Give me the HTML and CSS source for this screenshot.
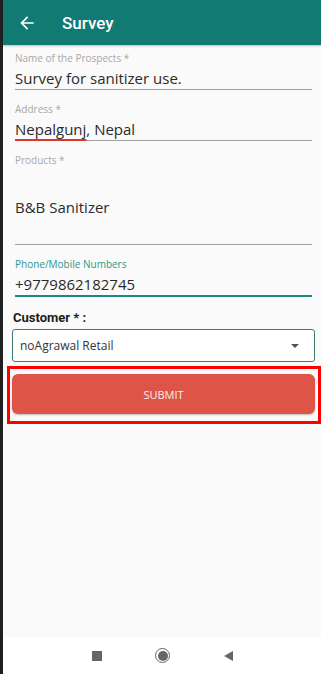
FILE: index.html
```html
<!DOCTYPE html>
<html>
<head>
<meta charset="utf-8">
<link rel="stylesheet" href="styles.css">
</head>
<body>
<div class="strip"></div>
<div class="screen">
  <header class="appbar">
    <svg class="back" viewBox="0 0 24 24" width="20" height="20"><path d="M20 11H7.83l5.59-5.59L12 4l-8 8 8 8 1.41-1.41L7.83 13H20v-2z" fill="#fff"/></svg>
    <span class="title">Survey</span>
  </header>
  <main class="form">
    <div class="field">
      <div class="label">Name of the Prospects *</div>
      <div class="value">Survey for sanitizer use.</div>
    </div>
    <div class="field">
      <div class="label">Address *</div>
      <div class="value"><span class="spell">Nepalgunj</span>, Nepal</div>
    </div>
    <div class="field">
      <div class="label">Products *</div>
      <div class="value tall">B&amp;B Sanitizer</div>
    </div>
    <div class="field focused">
      <div class="label">Phone/Mobile Numbers</div>
      <div class="value">+9779862182745</div>
    </div>
    <div class="cust-label">Customer * :</div>
    <div class="select">
      <span>noAgrawal Retail</span>
      <span class="caret"></span>
    </div>
    <div class="highlight">
      <button class="submit">SUBMIT</button>
    </div>
  </main>
  <nav class="navbar">
    <span class="nav-square"></span>
    <span class="nav-circle"><span></span></span>
    <span class="nav-back"></span>
  </nav>
</div>
</body>
</html>
```
FILE: styles.css
```css
* { box-sizing: border-box; }
html, body { margin: 0; padding: 0; }
body {
  width: 321px;
  height: 674px;
  display: flex;
  background: #1f1f1f;
  font-family: "Open Sans", "Noto Sans", sans-serif;
  overflow: hidden;
}
.strip { width: 3px; background: #1f1f1f; }
.screen {
  flex: 1;
  display: flex;
  flex-direction: column;
  background: #fafafa;
}
.appbar {
  height: 45px;
  background: #117a72;
  display: flex;
  align-items: center;
  padding-left: 14px;
  box-shadow: 0 1px 2px rgba(0,0,0,0.25);
}
.back { display: block; }
.title {
  margin-left: 25px;
  color: #fff;
  font-family: Roboto, sans-serif;
  font-weight: 500;
  font-size: 17px;
}
.form {
  flex: 1;
  padding: 6px 9px 0 12px;
  display: flex;
  flex-direction: column;
}
.field { margin-bottom: 12px; border-bottom: 1px solid #a0a0a0; }
.field .label {
  font-size: 10px;
  line-height: 14px;
  color: #a8a8a8;
}
.field .value {
  margin-top: 2px;
  font-size: 15px;
  line-height: 22px;
  color: #2a2a2a;
}
.field .value.tall {
  height: 75px;
  display: flex;
  align-items: center;
}
.spell {
  text-decoration: underline #e0352b;
  text-decoration-thickness: 1.5px;
  text-underline-offset: 4px;
}
.field.focused { border-bottom: 2px solid #1d8a82; margin-bottom: 13px; }
.field.focused .label { color: #2e968f; }
.cust-label {
  font-family: Roboto, sans-serif;
  font-weight: 700;
  font-size: 13px;
  line-height: 16px;
  color: #1c1c1c;
  margin-left: -2px;
}
.select {
  margin: 3px -3px 0 -3px;
  height: 33px;
  background: #fff;
  border: 1px solid #3c7a72;
  border-radius: 3px;
  display: flex;
  align-items: center;
  justify-content: space-between;
  padding: 0 15px 0 7px;
  font-size: 12px;
  color: #333;
}
.caret {
  width: 0; height: 0;
  border-left: 4px solid transparent;
  border-right: 4px solid transparent;
  border-top: 4px solid #555;
}
.highlight {
  margin: 4px -9px 0 -8px;
  border: 3px solid #ff0000;
  padding: 5px 3px 7px 2px;
}
.submit {
  display: block;
  width: 100%;
  height: 40px;
  border: none;
  border-radius: 6px;
  background: #df5448;
  color: #fdeceb;
  font-family: "Open Sans", sans-serif;
  font-size: 11px;
  box-shadow: 0 1px 2px rgba(0,0,0,0.25);
}
.navbar {
  height: 37px;
  background: #fff;
  display: flex;
  align-items: center;
  padding-left: 89px;
}
.nav-square {
  width: 10px; height: 10px;
  background: #666;
  margin-right: 53px;
}
.nav-circle {
  width: 15px; height: 15px;
  border-radius: 50%;
  border: 1.5px solid #666;
  display: flex;
  align-items: center;
  justify-content: center;
  margin-right: 54px;
}
.nav-circle span {
  width: 10px; height: 10px; border-radius: 50%; background: #666;
}
.nav-back {
  width: 0; height: 0;
  border-top: 5px solid transparent;
  border-bottom: 5px solid transparent;
  border-right: 9px solid #666;
}
```
